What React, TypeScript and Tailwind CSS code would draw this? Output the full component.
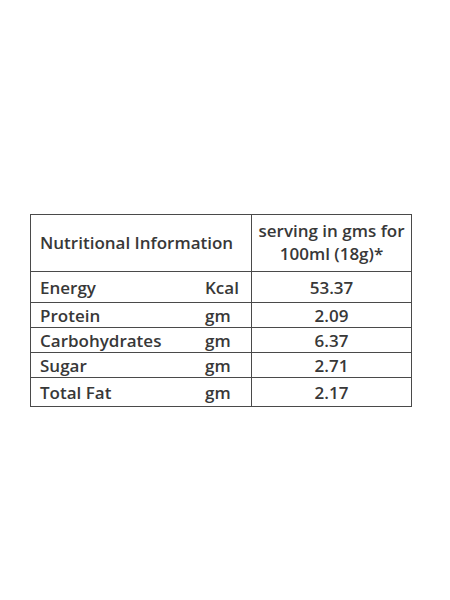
import React from "react";

const rows: { label: string; unit: string; value: string; h: string }[] = [
  { label: "Energy", unit: "Kcal", value: "53.37", h: "h-[31px]" },
  { label: "Protein", unit: "gm", value: "2.09", h: "h-[25px]" },
  { label: "Carbohydrates", unit: "gm", value: "6.37", h: "h-[25px]" },
  { label: "Sugar", unit: "gm", value: "2.71", h: "h-[25px]" },
  { label: "Total Fat", unit: "gm", value: "2.17", h: "h-[29px]" },
];

export default function App() {
  return (
    <div
      className="w-[450px] h-[600px] bg-white pt-[214px] pl-[30px] text-[#383838] font-semibold"
      style={{ fontFamily: '"Open Sans", "Noto Sans", sans-serif' }}
    >
      <div className="w-[382px] border border-[#4a4a4a] flex flex-col text-[17px]">
        <div className="flex h-[56px]">
          <div className="w-[220px] flex items-center pl-[9px] pb-[2px] leading-none">
            Nutritional Information
          </div>
          <div className="flex-1 border-l border-[#4a4a4a] flex flex-col items-center justify-center pb-[2px] leading-[23px] text-center">
            <span>serving in gms for</span>
            <span>100ml (18g)*</span>
          </div>
        </div>
        {rows.map((r) => (
          <div key={r.label} className={`flex border-t border-[#4a4a4a] ${r.h}`}>
            <div className="w-[174px] flex items-center pl-[9px] leading-none">{r.label}</div>
            <div className="w-[46px] flex items-center leading-none">{r.unit}</div>
            <div className="flex-1 border-l border-[#4a4a4a] flex items-center justify-center leading-none">
              {r.value}
            </div>
          </div>
        ))}
      </div>
    </div>
  );
}
